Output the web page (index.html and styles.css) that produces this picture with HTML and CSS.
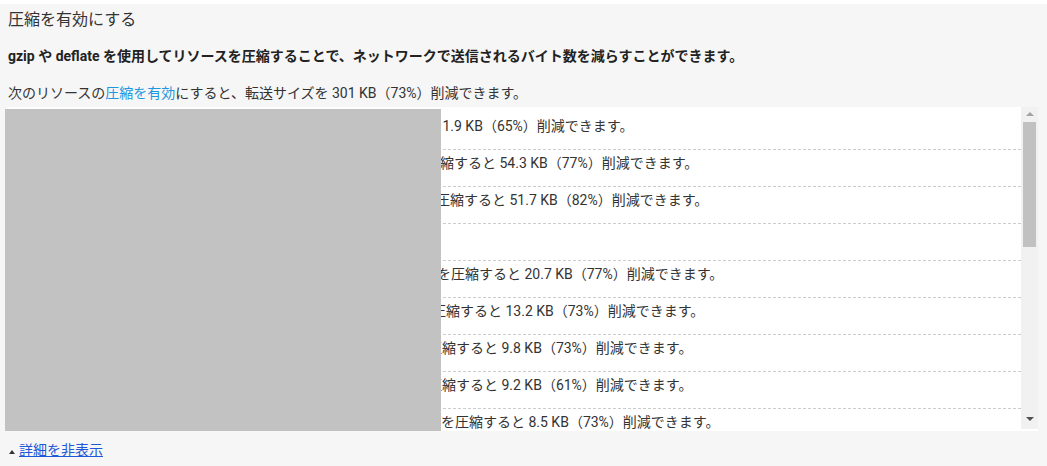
FILE: index.html
```html
<!DOCTYPE html>
<html lang="ja">
<head>
<meta charset="utf-8">
<title>圧縮を有効にする</title>
<link rel="stylesheet" href="styles.css">
</head>
<body>
<div class="panel">
  <h2 class="title">圧縮を有効にする</h2>
  <p class="summary">gzip や deflate を使用してリソースを圧縮することで、ネットワークで送信されるバイト数を減らすことができます。</p>
  <p class="lead">次のリソースの<a class="inline-link" href="#">圧縮を有効</a>にすると、転送サイズを 301 KB（73%）削減できます。</p>
  <div class="listbox">
    <ul class="rows">
      <li class="row"><span class="url u1">https://example.com/static/js/app.js</span><span class="msg">を圧縮すると 1.9 KB（65%）削減できます。</span></li>
      <li class="row"><span class="url u2">https://example.com/static/js/vendor.min.js</span><span class="msg">を圧縮すると 54.3 KB（77%）削減できます。</span></li>
      <li class="row"><span class="url u3">https://example.com/static/js/runtime.min.js</span><span class="msg">を圧縮すると 51.7 KB（82%）削減できます。</span></li>
      <li class="row"><span class="url u4">https://ex.jp/a.js</span><span class="msg">を圧縮すると 1.1 KB（60%）削減できます。</span></li>
      <li class="row"><span class="url u5">https://example.com/static/css/theme.min.css</span><span class="msg">を圧縮すると 20.7 KB（77%）削減できます。</span></li>
      <li class="row"><span class="url u6">https://example.com/static/js/plugins.min.js</span><span class="msg">を圧縮すると 13.2 KB（73%）削減できます。</span></li>
      <li class="row"><span class="url u7">https://example.com/static/js/tracker.js</span><span class="msg">を圧縮すると 9.8 KB（73%）削減できます。</span></li>
      <li class="row"><span class="url u8">https://example.com/static/js/slider.js</span><span class="msg">を圧縮すると 9.2 KB（61%）削減できます。</span></li>
      <li class="row"><span class="url u9">https://example.com/static/css/layout.min.css</span><span class="msg">を圧縮すると 8.5 KB（73%）削減できます。</span></li>
    </ul>
    <div class="scrollbar">
      <span class="arrow arrow-up"></span>
      <span class="thumb"></span>
      <span class="track-fill"></span>
      <span class="arrow arrow-down"></span>
    </div>
    <div class="redaction"></div>
  </div>
  <div class="toggle"><span class="caret"></span><a class="toggle-link" href="#">詳細を非表示</a></div>
</div>
</body>
</html>
```

FILE: styles.css
```css
html, body {
  margin: 0;
  padding: 0;
  background: #ffffff;
}
body {
  font-family: Roboto, "Noto Sans CJK JP", sans-serif;
  color: #333333;
  padding-top: 4px;
}
.panel {
  background: #f6f6f6;
  padding: 4px 9px 6px 8px;
  min-height: calc(100vh - 4px);
  box-sizing: border-box;
}
.title {
  margin: 0;
  font-size: 16px;
  font-weight: normal;
  line-height: 22px;
  color: #333333;
  padding-top: 1px;
}
.summary {
  margin: 15px 0 0 0;
  font-size: 14px;
  font-weight: bold;
  line-height: 20px;
  color: #222222;
}
.lead {
  margin: 17px 0 0 0;
  font-size: 14px;
  line-height: 20px;
}
.inline-link {
  color: #1e96e0;
  text-decoration: none;
}
.listbox {
  position: relative;
  margin-top: 4px;
  height: 324px;
  background: #ffffff;
  display: flex;
}
.rows {
  list-style: none;
  margin: 0;
  padding: 6px 0 0 0;
  flex: 1;
  overflow: hidden;
}
.row {
  display: flex;
  white-space: nowrap;
  font-size: 14px;
  line-height: 20px;
  padding: 3px 0 13px 10px;
  border-bottom: 1px dashed #cccccc;
}
.url {
  display: inline-block;
  flex: 0 0 auto;
  color: #333333;
}
.u1 { width: 337px; }
.u2 { width: 394px; }
.u3 { width: 404px; }
.u4 { width: 132px; }
.u5 { width: 419px; }
.u6 { width: 400px; }
.u7 { width: 396px; }
.u8 { width: 396px; }
.u9 { width: 423px; }
.msg {
  flex: 0 0 auto;
}
.scrollbar {
  width: 17px;
  flex: 0 0 17px;
  background: #f1f1f1;
  display: flex;
  flex-direction: column;
  align-items: center;
  height: 322px;
}
.arrow {
  width: 0;
  height: 0;
  border-left: 4px solid transparent;
  border-right: 4px solid transparent;
}
.arrow-up {
  margin-top: 5px;
  border-bottom: 4px solid #a3a3a3;
}
.thumb {
  margin-top: 6px;
  width: 13px;
  height: 125px;
  background: #c1c1c1;
}
.track-fill {
  flex: 1;
}
.arrow-down {
  margin-bottom: 8px;
  border-top: 4px solid #505050;
}
.redaction {
  position: absolute;
  left: -3px;
  top: 2px;
  width: 436px;
  height: 322px;
  background: #c2c2c2;
}
.toggle {
  margin-top: 9px;
  display: flex;
  align-items: center;
  font-size: 14px;
  line-height: 20px;
}
.caret {
  width: 0;
  height: 0;
  border-left: 3px solid transparent;
  border-right: 3px solid transparent;
  border-bottom: 4px solid #333333;
  margin: 3px 4px 0 1px;
}
.toggle-link {
  color: #1f57d6;
  text-decoration: underline;
}
```
